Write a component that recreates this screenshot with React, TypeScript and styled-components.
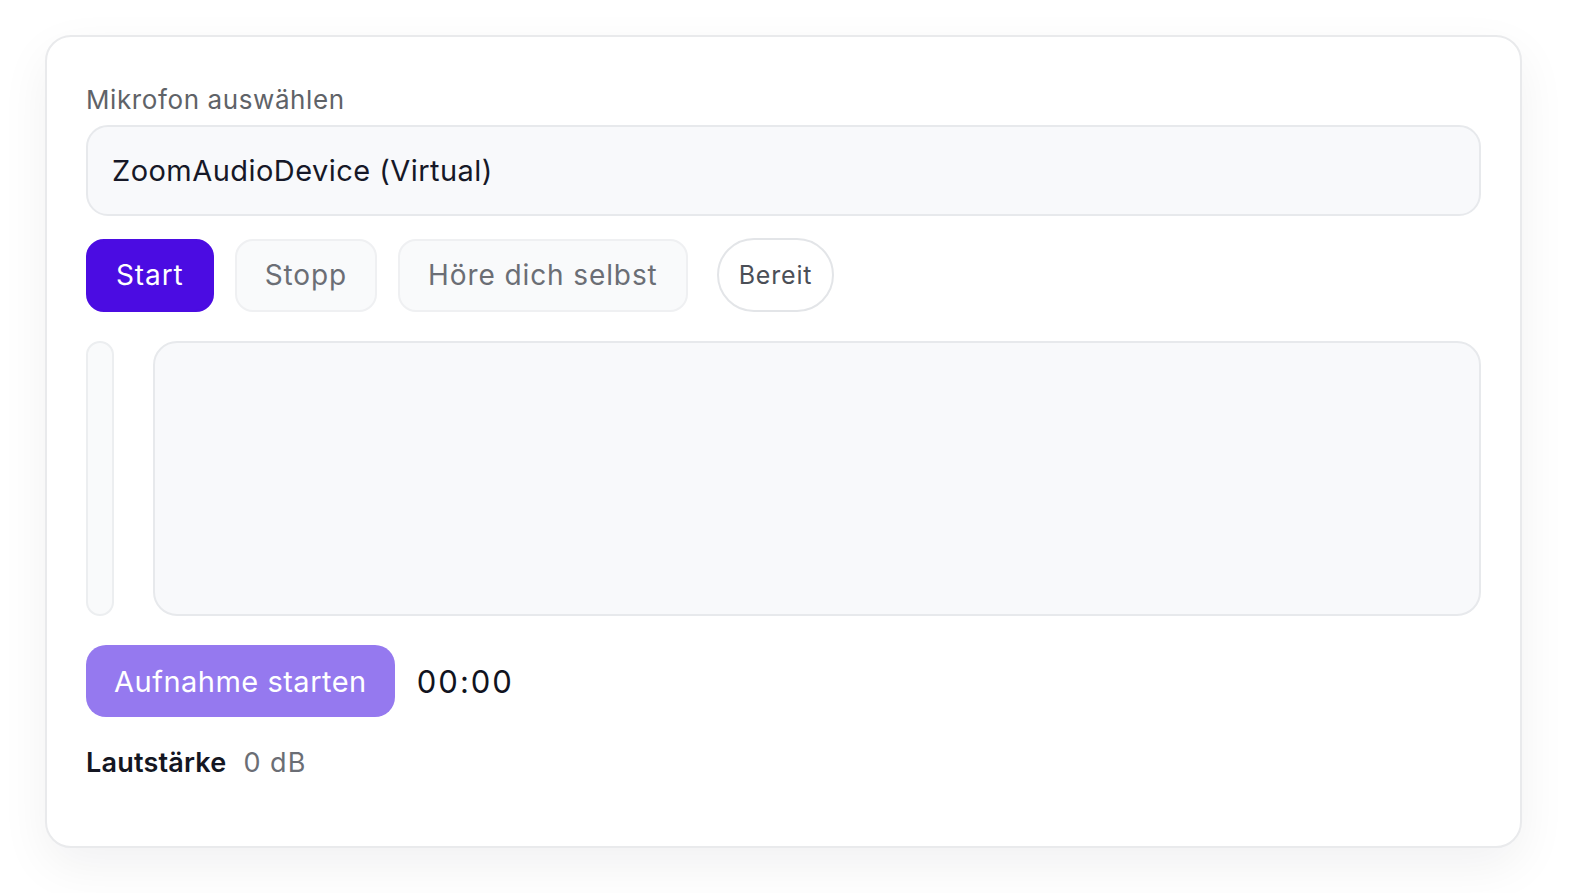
import styled, { createGlobalStyle } from "styled-components";

const GlobalStyle = createGlobalStyle`
  html, body {
    margin: 0;
    padding: 0;
    background: #ffffff;
  }
  body {
    font-family: Inter, "Noto Sans", sans-serif;
    color: #111827;
  }
`;

const Page = styled.main`
  box-sizing: border-box;
  min-height: 100vh;
  padding: 35px 0 0 45px;
`;

const Card = styled.section`
  box-sizing: border-box;
  width: 1477px;
  height: 813px;
  background: #ffffff;
  border: 2px solid #e9eaec;
  border-radius: 26px;
  box-shadow: 0 18px 50px rgba(17, 24, 39, 0.06);
  padding: 47px 39px 0 39px;
  display: flex;
  flex-direction: column;
`;

const Label = styled.label`
  font-size: 26px;
  line-height: 32px;
  color: #5f6368;
  letter-spacing: 0.6px;
`;

const Select = styled.div`
  box-sizing: border-box;
  margin-top: 9px;
  height: 91px;
  display: flex;
  align-items: center;
  padding: 0 24px;
  background: #f8f9fb;
  border: 2px solid #e7e9ec;
  border-radius: 22px;
  font-size: 29px;
  color: #161827;
  letter-spacing: 0.45px;
`;

const ButtonRow = styled.div`
  display: flex;
  align-items: center;
  margin-top: 22px;
  gap: 21px;
`;

const Button = styled.button<{ $primary?: boolean }>`
  box-sizing: border-box;
  height: 73px;
  padding: 0 28px;
  border-radius: 18px;
  font-family: inherit;
  font-size: 28px;
  letter-spacing: 0.9px;
  cursor: pointer;
  background: ${(p) => (p.$primary ? "#4b0ce2" : "#f9fafb")};
  color: ${(p) => (p.$primary ? "#ffffff" : "#6b6e75")};
  border: 2px solid ${(p) => (p.$primary ? "#4b0ce2" : "#eff0f2")};
`;

const Status = styled.span`
  box-sizing: border-box;
  margin-left: 8px;
  height: 74px;
  padding: 0 20px;
  display: inline-flex;
  align-items: center;
  border-radius: 37px;
  border: 2px solid #e3e5e8;
  font-size: 25px;
  letter-spacing: 0.8px;
  color: #4b4f57;
`;

const Meter = styled.div`
  display: flex;
  gap: 39px;
  margin-top: 29px;
  height: 275px;
`;

const LevelBar = styled.div`
  box-sizing: border-box;
  width: 28px;
  background: #f9fafb;
  border: 2px solid #eceef0;
  border-radius: 14px;
`;

const Wave = styled.div`
  box-sizing: border-box;
  flex: 1;
  background: #f8f9fb;
  border: 2px solid #e7e9ec;
  border-radius: 24px;
`;

const RecordRow = styled.div`
  display: flex;
  align-items: center;
  gap: 22px;
  margin-top: 29px;
`;

const RecordButton = styled.button`
  height: 72px;
  padding: 0 28px;
  border: none;
  border-radius: 20px;
  background: #9579ef;
  color: #ffffff;
  font-family: inherit;
  font-size: 29px;
  letter-spacing: 0.5px;
  cursor: pointer;
`;

const Timer = styled.span`
  font-size: 31px;
  color: #111320;
  letter-spacing: 2px;
`;

const Volume = styled.div`
  display: flex;
  align-items: baseline;
  gap: 17px;
  margin-top: 29px;
  font-size: 27px;
`;

const VolumeLabel = styled.span`
  font-weight: 600;
  color: #141622;
  letter-spacing: 0.2px;
`;

const VolumeValue = styled.span`
  color: #6b6e75;
  letter-spacing: 1px;
`;

export default function App() {
  return (
    <>
      <GlobalStyle />
      <Page>
        <Card>
          <Label>Mikrofon auswählen</Label>
          <Select>ZoomAudioDevice (Virtual)</Select>
          <ButtonRow>
            <Button $primary>Start</Button>
            <Button>Stopp</Button>
            <Button>Höre dich selbst</Button>
            <Status>Bereit</Status>
          </ButtonRow>
          <Meter>
            <LevelBar />
            <Wave />
          </Meter>
          <RecordRow>
            <RecordButton>Aufnahme starten</RecordButton>
            <Timer>00:00</Timer>
          </RecordRow>
          <Volume>
            <VolumeLabel>Lautstärke</VolumeLabel>
            <VolumeValue>0 dB</VolumeValue>
          </Volume>
        </Card>
      </Page>
    </>
  );
}
